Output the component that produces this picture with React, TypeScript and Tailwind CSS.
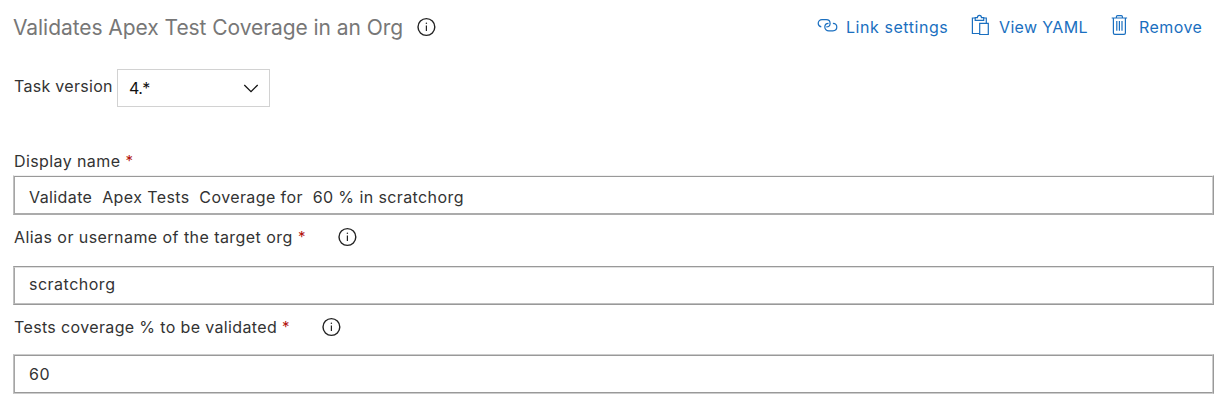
import React from "react";

function InfoIcon({ className = "" }: { className?: string }) {
  return (
    <svg className={`h-5 w-5 shrink-0 ${className}`} viewBox="0 0 20 20" fill="none" stroke="#222222">
      <circle cx="10.400" cy="10" r="8.400" strokeWidth="1.4" />
      <path d="M10.400 8.400V14" strokeWidth="1.2" />
      <circle cx="10.400" cy="6.300" r="0.750" fill="#222222" stroke="none" />
    </svg>
  );
}

function LinkIcon() {
  return (
    <svg className="h-5 w-[22px] shrink-0" viewBox="0 0 22 20" fill="none" stroke="#1a6fc0" strokeWidth="1.2">
      <path d="M4.300 9.900C2.500 9.600 1.200 8.200 1.200 6.300c0-2.100 1.700-3.700 3.800-3.700h4.200c2.200 0 3.900 1.600 3.900 3.800 0 2.100-1.600 3.500-3.800 3.500" />
      <path d="M15.900 6.300c2.200.1 3.900 1.600 3.900 3.800s-1.700 3.700-3.900 3.700h-4.100c-2.200 0-4-1.600-4-3.700 0-2.200 1.500-3.700 3.700-3.700" />
    </svg>
  );
}

function ClipboardIcon() {
  return (
    <svg className="mb-1 h-[22px] w-5 shrink-0" viewBox="0 0 20 22" fill="none" stroke="#1a6fc0" strokeWidth="1.2">
      <path d="M8.700 19.500H1.400V4h2.800M12.700 4h2.600v5.400" />
      <path d="M4.200 6.400V3.700h2.200C6.400 2.400 7.200 1.300 8.450 1.300s2.050 1.100 2.050 2.400h2.200v2.700Z" />
      <path d="M8.700 9.400h8.600v11.100H8.700Z" />
    </svg>
  );
}

function TrashIcon() {
  return (
    <svg className="mb-1 h-[22px] w-[18px] shrink-0" viewBox="0 0 18 22" fill="none" stroke="#1a6fc0" strokeWidth="1.2">
      <path d="M.7 4h15.400M5.400 4V2.700c0-.7.4-1.100 1.100-1.100h3.800c.7 0 1.100.4 1.100 1.100V4" />
      <path d="M2.400 4v15c0 .9.5 1.400 1.400 1.400h9.200c.9 0 1.400-.5 1.400-1.400V4" />
      <path d="M5.800 7v9.700M8.400 7v9.700M11 7v9.700" />
    </svg>
  );
}

function Star({ className = "" }: { className?: string }) {
  return <span className={`text-[15px] text-[#b3140f] ${className}`}>*</span>;
}

export default function App() {
  return (
    <main className="flex h-[410px] w-[1232px] flex-col overflow-hidden bg-white pr-[18px] pl-[13px] font-['Inter',sans-serif] text-[16px] leading-5 text-[#333333]">
      <header className="flex h-[54px] items-center">
        <h1 className="w-[403px] pt-0.5 text-[21px] leading-6 tracking-[-0.06px] whitespace-nowrap text-[#777777]">
          Validates Apex Test Coverage in an Org
        </h1>
        <InfoIcon />
        <nav className="ml-auto flex items-center text-[#1a6fc0]">
          <a className="flex w-[154px] items-center gap-[7px] whitespace-nowrap">
            <LinkIcon />
            <span className="tracking-[0.55px]">Link settings</span>
          </a>
          <a className="flex w-[140px] items-center gap-[8px] whitespace-nowrap">
            <ClipboardIcon />
            <span className="tracking-[0.35px]">View YAML</span>
          </a>
          <a className="flex w-[103px] items-center gap-[10px] whitespace-nowrap">
            <TrashIcon />
            <span className="tracking-[0.45px]">Remove</span>
          </a>
        </nav>
      </header>

      <section className="mt-[15px] flex h-[38px]">
        <span className="w-[104px] pt-[7px] pl-px tracking-[0.3px] whitespace-nowrap">Task version</span>
        <div className="flex h-[38px] w-[153px] items-center justify-between border-[1.5px] border-[#d2d2d2] pr-[10px] pl-[11px] text-[#111111]">
          <span className="tracking-[-0.6px]">4.*</span>
          <svg className="h-4 w-4" viewBox="0 0 16 16" fill="none" stroke="#111111" strokeWidth="1.3">
            <path d="M1.300 5 8 11.600l6.700-6.600" />
          </svg>
        </div>
      </section>

      <label className="mt-[44px] flex h-5 items-center pl-px whitespace-nowrap">
        <span className="tracking-[0.4px]">Display name</span>
        <Star className="ml-[5px]" />
      </label>
      <div className="mt-1 h-10 border border-t-[#f0f0f0] border-r-[#999999] border-b-[#ababab] border-l-[#c0c0c0]">
        <div className="flex h-full items-center border border-t-[#999999] border-r-[#cccccc] border-b-[#ababab] border-l-[#a5a5a5] pt-[3px] pl-[14px]">
          <span className="tracking-[0.4px] whitespace-pre">Validate  Apex Tests  Coverage for  60 % in scratchorg</span>
        </div>
      </div>

      <label className="mt-[12px] flex h-5 items-center pl-px whitespace-nowrap">
        <span className="w-[284px] tracking-[0.44px]">Alias or username of the target org</span>
        <Star className="w-[26px]" />
        <InfoIcon className="ml-[13px]" />
      </label>
      <div className="mt-[19px] h-[39px] border border-t-[#999999] border-r-[#999999] border-b-[#999999] border-l-[#c0c0c0]">
        <div className="flex h-full items-center border border-t-[#e0e0e0] border-r-[#cccccc] border-b-[#c0c0c0] border-l-[#a5a5a5] pb-[3px] pl-[14px]">
          <span className="tracking-[0.5px]">scratchorg</span>
        </div>
      </div>

      <label className="mt-[12px] flex h-5 items-center pl-px whitespace-nowrap">
        <span className="w-[268px] tracking-[0.36px]">Tests coverage % to be validated</span>
        <Star className="w-[26px]" />
        <InfoIcon className="ml-[13px]" />
      </label>
      <div className="mt-[17px] h-10 border border-t-[#cccccc] border-r-[#999999] border-b-[#cccccc] border-l-[#c0c0c0]">
        <div className="flex h-full items-center border border-t-[#999999] border-r-[#cccccc] border-b-[#999999] border-l-[#a5a5a5] pl-[14px]">
          <span className="tracking-[0.6px]">60</span>
        </div>
      </div>
    </main>
  );
}
